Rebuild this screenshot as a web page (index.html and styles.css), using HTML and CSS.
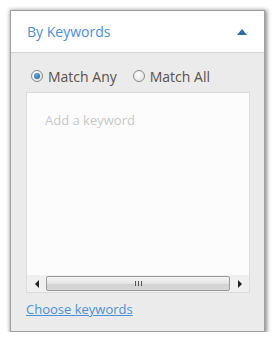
FILE: index.html
```html
<!DOCTYPE html>
<html>
<head>
<meta charset="utf-8">
<link rel="stylesheet" href="styles.css">
</head>
<body>
<div class="panel">
  <div class="header">
    <span class="title">By Keywords</span>
    <svg class="caret" width="10" height="6" viewBox="0 0 10 6"><path d="M0 6 L5 0 L10 6 Z" fill="#2a6fa8"/></svg>
  </div>
  <div class="body">
    <div class="radios">
      <label class="radio"><span class="dot on"></span>Match Any</label>
      <label class="radio"><span class="dot"></span>Match All</label>
    </div>
    <div class="box">
      <div class="area">
        <span class="placeholder">Add a keyword</span>
      </div>
      <div class="scrollbar">
        <span class="arrow left"></span>
        <div class="thumb"><span class="grip"></span></div>
        <span class="arrow right"></span>
      </div>
    </div>
    <a class="link" href="#">Choose keywords</a>
  </div>
</div>
</body>
</html>
```
FILE: styles.css
```css
html, body {
  margin: 0;
  padding: 0;
  background: #ffffff;
}
body {
  font-family: "Open Sans", "Noto Sans", "Liberation Sans", sans-serif;
}
.panel {
  margin: 10px 0 0 10px;
  width: 253px;
  border: 1px solid #a0a0a0;
  box-shadow: 1px 1px 4px 1px rgba(0,0,0,0.45);
  background: #ebebeb;
}
.header {
  height: 41px;
  background: #ffffff;
  border-bottom: 1px solid #d4d4d4;
  display: flex;
  align-items: center;
  justify-content: space-between;
  padding: 0 17px 0 16px;
}
.title {
  font-size: 14px;
  color: #4a90d9;
}
.caret {
  display: block;
  margin-top: 1px;
}
.body {
  padding: 12px 14px 12px 15px;
}
.radios {
  display: flex;
  gap: 16px;
  height: 22px;
  align-items: center;
  margin-left: 5px;
}
.radio {
  display: flex;
  align-items: center;
  font-size: 14px;
  color: #5a5048;
  gap: 5px;
}
.dot {
  width: 10px;
  height: 10px;
  border-radius: 50%;
  border: 1px solid #8a8a8a;
  background: radial-gradient(circle at 40% 35%, #ffffff, #dcdcdc);
  display: inline-block;
  position: relative;
}
.dot.on::after {
  content: "";
  position: absolute;
  left: 2px;
  top: 2px;
  width: 6px;
  height: 6px;
  border-radius: 50%;
  background: radial-gradient(circle at 40% 35%, #5fb0e8, #1a5a90);
}
.box {
  margin-top: 5px;
  border: 1px solid #dcdcdc;
  background: #fcfcfc;
  height: 199px;
  display: flex;
  flex-direction: column;
}
.area {
  flex: 1;
  padding: 15px 18px 0;
}
.placeholder {
  font-size: 13px;
  color: #c8c8c8;
}
.scrollbar {
  height: 17px;
  background: #f0f0f0;
  display: flex;
  align-items: center;
}
.arrow {
  width: 19px;
  display: flex;
  justify-content: center;
}
.arrow.left::before {
  content: "";
  border-top: 4px solid transparent;
  border-bottom: 4px solid transparent;
  border-right: 4px solid #222;
}
.arrow.right::before {
  content: "";
  border-top: 4px solid transparent;
  border-bottom: 4px solid transparent;
  border-left: 4px solid #222;
}
.thumb {
  flex: 1;
  height: 13px;
  border: 1px solid #9a9a9a;
  border-radius: 2px;
  background: linear-gradient(#f4f4f4, #e4e4e4 50%, #d2d2d2 51%, #d8d8d8);
  display: flex;
  align-items: center;
  justify-content: center;
}
.grip {
  width: 7px;
  height: 5px;
  background: repeating-linear-gradient(90deg, #555 0 1px, transparent 1px 3px);
}
.link {
  display: inline-block;
  margin-top: 7px;
  font-size: 13px;
  color: #4a90d9;
  text-decoration: underline;
}
```
